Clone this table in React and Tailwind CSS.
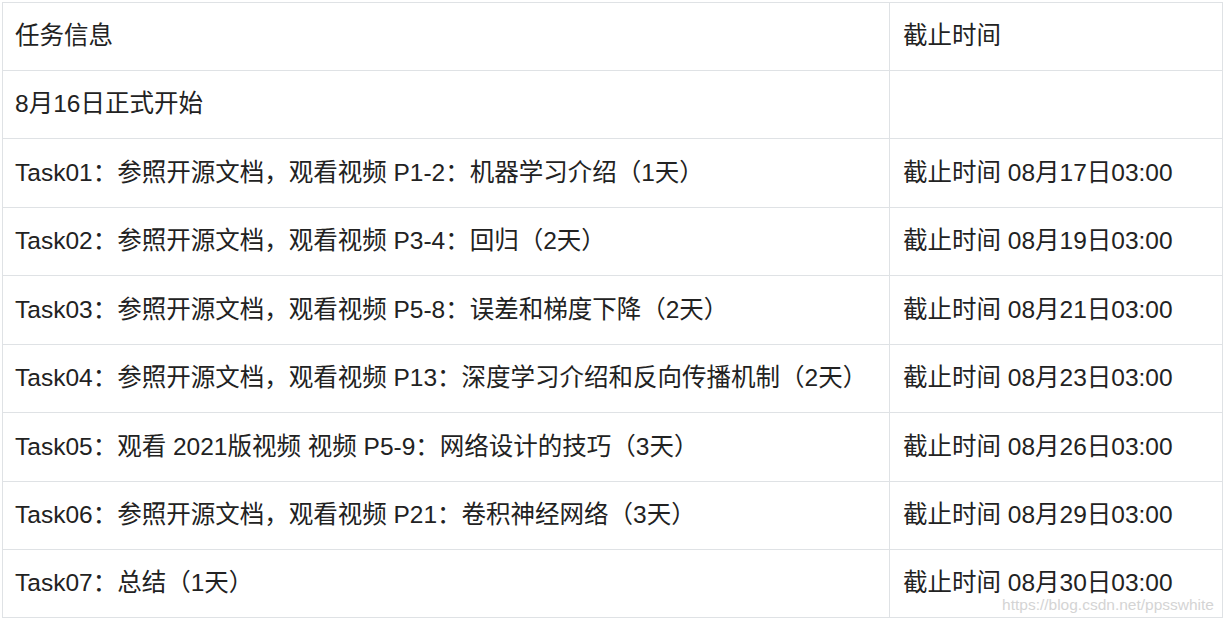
const filas = [
  { tarea: '任务信息', fecha: '截止时间', alto: 'h-[68px]' },
  { tarea: '8月16日正式开始', fecha: '', alto: 'h-[68px]' },
  { tarea: 'Task01：参照开源文档，观看视频 P1-2：机器学习介绍（1天）', fecha: '截止时间 08月17日03:00', alto: 'h-[69px]' },
  { tarea: 'Task02：参照开源文档，观看视频 P3-4：回归（2天）', fecha: '截止时间 08月19日03:00', alto: 'h-[68px]' },
  { tarea: 'Task03：参照开源文档，观看视频 P5-8：误差和梯度下降（2天）', fecha: '截止时间 08月21日03:00', alto: 'h-[69px]' },
  { tarea: 'Task04：参照开源文档，观看视频 P13：深度学习介绍和反向传播机制（2天）', fecha: '截止时间 08月23日03:00', alto: 'h-[68px]' },
  { tarea: 'Task05：观看 2021版视频 视频 P5-9：网络设计的技巧（3天）', fecha: '截止时间 08月26日03:00', alto: 'h-[69px]' },
  { tarea: 'Task06：参照开源文档，观看视频 P21：卷积神经网络（3天）', fecha: '截止时间 08月29日03:00', alto: 'h-[68px]' },
  { tarea: 'Task07：总结（1天）', fecha: '截止时间 08月30日03:00', alto: 'h-[68px]' },
]

export default function App() {
  return (
    <div
      className="bg-white w-[1226px] h-[619px] pt-[2px] pl-[2px] text-[#222]"
      style={{ fontFamily: '"Liberation Sans", Arial, "Noto Sans CJK SC", sans-serif' }}
    >
      <div className="relative w-[1221px] border-t border-l border-[#dfe2e5]">
        {filas.map((fila, i) => (
          <div key={i} className={`flex border-b border-[#dfe2e5] ${fila.alto}`}>
            <div className="w-[887px] flex items-center pl-[12px] border-r border-[#dfe2e5] text-[24.5px]">
              {fila.tarea}
            </div>
            <div className="flex-1 flex items-center pl-[13px] border-r border-[#dfe2e5] text-[24.5px]">
              {fila.fecha}
            </div>
          </div>
        ))}
        <div
          className="absolute right-[9px] bottom-[6px] text-[15.5px] text-[#d4d4d4] leading-none"
          style={{ textShadow: '0 0 1px #fff' }}
        >
          https://blog.csdn.net/ppsswhite
        </div>
      </div>
    </div>
  )
}
